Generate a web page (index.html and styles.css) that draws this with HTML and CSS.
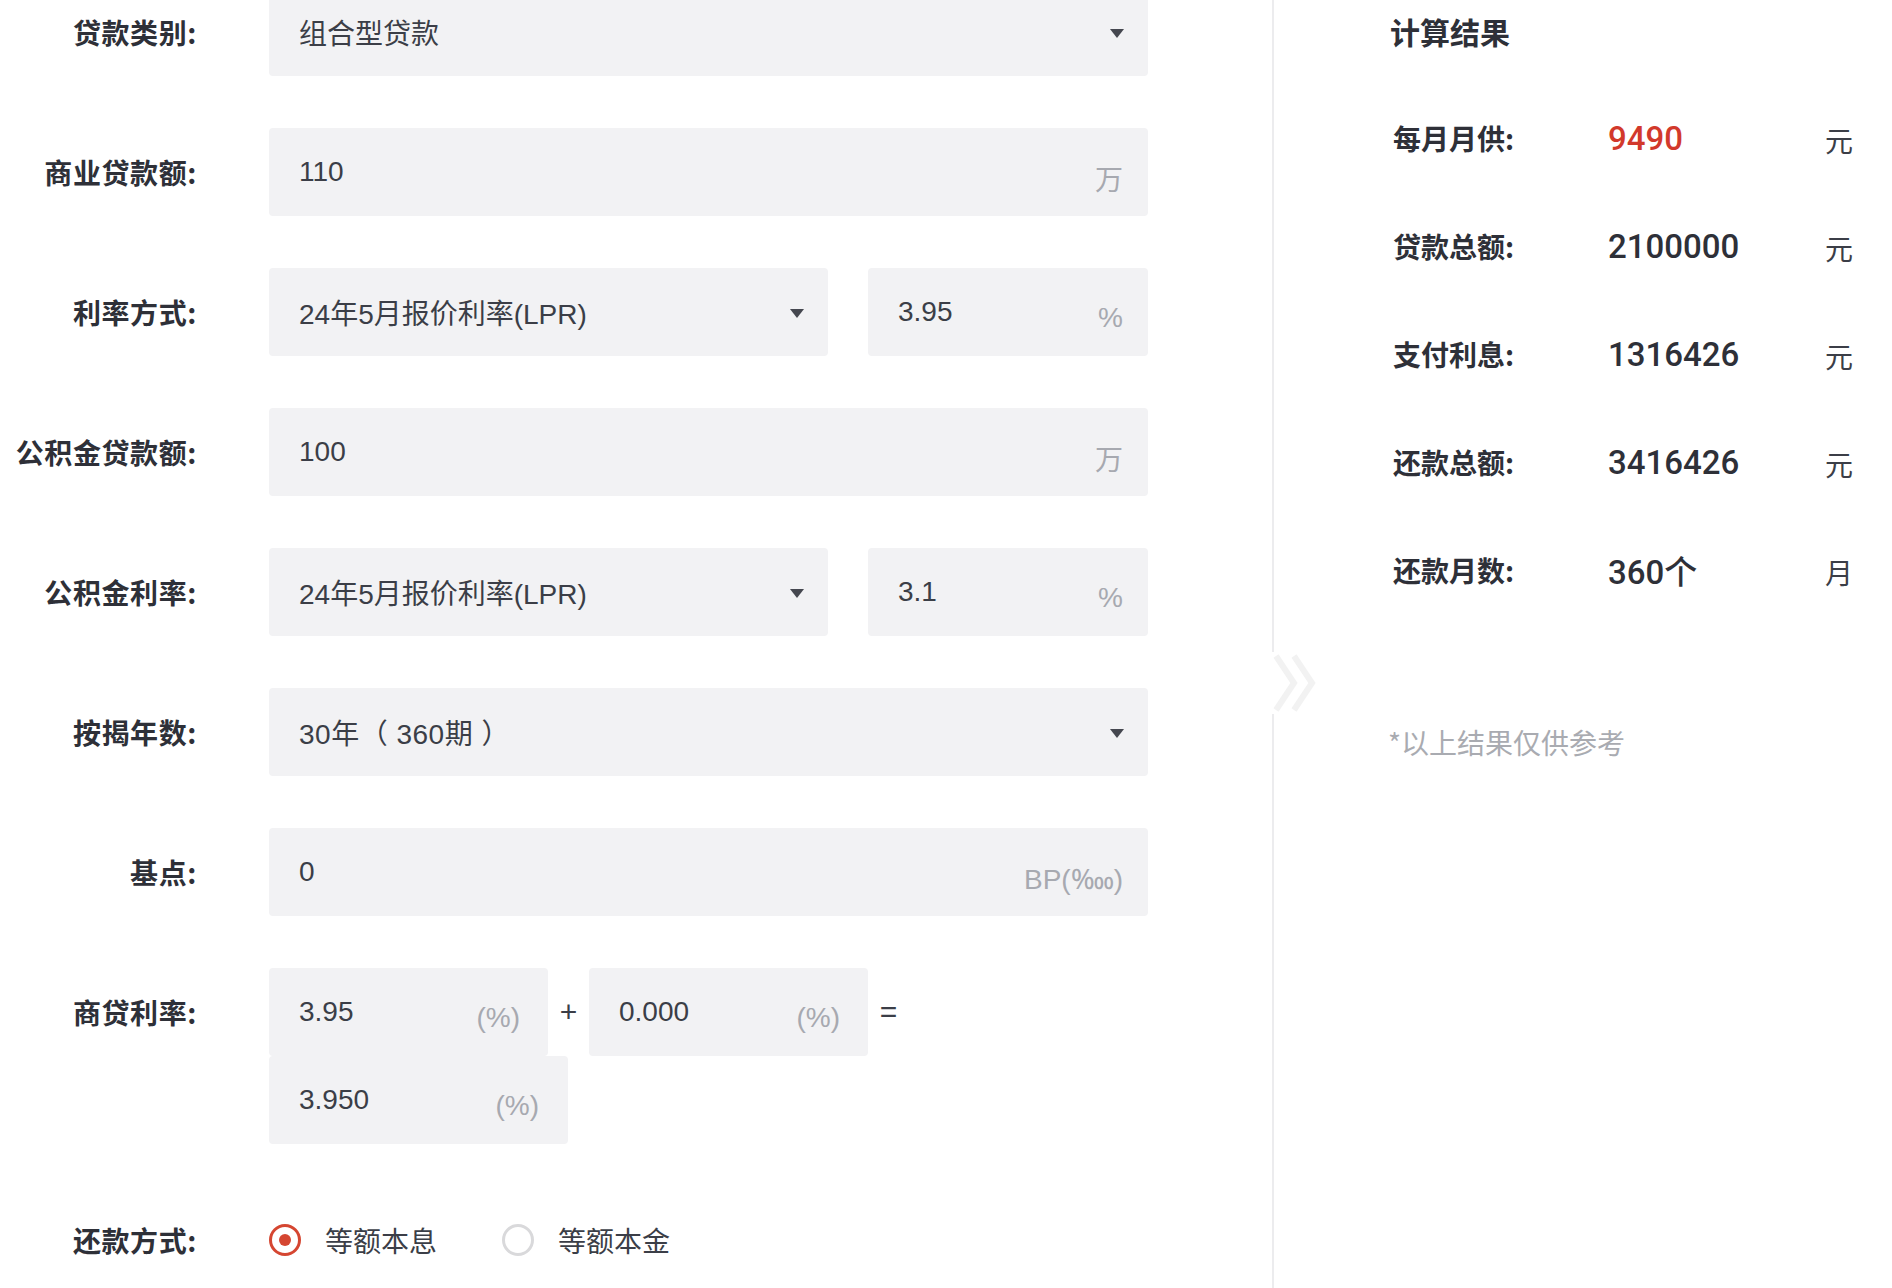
FILE: index.html
```html
<!DOCTYPE html>
<html lang="zh-CN">
<head>
<meta charset="utf-8">
<title>房贷计算器</title>
<link rel="stylesheet" href="styles.css">
</head>
<body>
<div class="page">
  <div class="form">
    <div class="row">
      <div class="label">贷款类别:</div>
      <div class="box select wide"><span class="val">组合型贷款</span><span class="arrow"></span></div>
    </div>
    <div class="row">
      <div class="label">商业贷款额:</div>
      <div class="box wide"><span class="val">110</span><span class="unit">万</span></div>
    </div>
    <div class="row">
      <div class="label">利率方式:</div>
      <div class="pair">
        <div class="box select mid"><span class="val">24年5月报价利率(LPR)</span><span class="arrow"></span></div>
        <div class="box rate"><span class="val">3.95</span><span class="unit">%</span></div>
      </div>
    </div>
    <div class="row">
      <div class="label">公积金贷款额:</div>
      <div class="box wide"><span class="val">100</span><span class="unit">万</span></div>
    </div>
    <div class="row">
      <div class="label">公积金利率:</div>
      <div class="pair">
        <div class="box select mid"><span class="val">24年5月报价利率(LPR)</span><span class="arrow"></span></div>
        <div class="box rate"><span class="val">3.1</span><span class="unit">%</span></div>
      </div>
    </div>
    <div class="row">
      <div class="label">按揭年数:</div>
      <div class="box select wide"><span class="val term">30年（ 360期 ）</span><span class="arrow"></span></div>
    </div>
    <div class="row">
      <div class="label">基点:</div>
      <div class="box wide"><span class="val">0</span><span class="unit">BP(‱)</span></div>
    </div>
    <div class="row">
      <div class="label">商贷利率:</div>
      <div class="calc">
        <div class="box small"><span class="val">3.95</span><span class="unit">(%)</span></div>
        <span class="op">+</span>
        <div class="box small"><span class="val">0.000</span><span class="unit">(%)</span></div>
        <span class="op">=</span>
        <div class="box result"><span class="val">3.950</span><span class="unit">(%)</span></div>
      </div>
    </div>
    <div class="row last">
      <div class="label">还款方式:</div>
      <div class="radios">
        <label class="radio"><span class="dot on"></span><span>等额本息</span></label>
        <label class="radio"><span class="dot"></span><span>等额本金</span></label>
      </div>
    </div>
  </div>

  <div class="results">
    <svg class="chev" viewBox="0 0 46 62" width="46" height="62" aria-hidden="true">
      <rect x="0" y="0" width="8" height="62" fill="#ffffff"/>
      <polyline points="4,4 22,31 4,58" fill="none" stroke="#f2f2f2" stroke-width="6"/>
      <polyline points="22,4 40,31 22,58" fill="none" stroke="#f2f2f2" stroke-width="6"/>
    </svg>
    <h2 class="title">计算结果</h2>
    <div class="res-row"><span class="res-label">每月月供:</span><span class="res-val red">9490</span><span class="res-unit">元</span></div>
    <div class="res-row"><span class="res-label">贷款总额:</span><span class="res-val">2100000</span><span class="res-unit">元</span></div>
    <div class="res-row"><span class="res-label">支付利息:</span><span class="res-val">1316426</span><span class="res-unit">元</span></div>
    <div class="res-row"><span class="res-label">还款总额:</span><span class="res-val">3416426</span><span class="res-unit">元</span></div>
    <div class="res-row"><span class="res-label">还款月数:</span><span class="res-val">360个</span><span class="res-unit">月</span></div>
    <p class="note">*以上结果仅供参考</p>
  </div>
</div>
</body>
</html>
```
FILE: styles.css
```css
html, body {
  margin: 0;
  padding: 0;
  background: #ffffff;
}
body {
  font-family: "Liberation Sans", "Noto Sans CJK SC", sans-serif;
  color: #333333;
  overflow: hidden;
  height: 1288px;
}
.page {
  display: flex;
  align-items: stretch;
  height: 1288px;
}
.form {
  width: 1272px;
  flex: none;
  margin-top: -12px;
}
.row {
  display: flex;
  align-items: flex-start;
  margin-bottom: 52px;
}
.label {
  width: 197px;
  margin-right: 72px;
  height: 88px;
  line-height: 88px;
  text-align: right;
  font-family: "Noto Sans CJK SC", sans-serif;
  font-weight: 700;
  font-size: 28px;
  letter-spacing: 0.6px;
  color: #2e3038;
  white-space: nowrap;
  flex: none;
}
.box {
  box-sizing: border-box;
  height: 88px;
  background: #f2f2f4;
  border-radius: 4px;
  display: flex;
  align-items: center;
  justify-content: space-between;
  padding: 0 25px 0 30px;
  font-size: 28px;
  flex: none;
}
.wide { width: 879px; }
.mid { width: 559px; }
.rate { width: 280px; }
.small { width: 279px; padding-right: 28px; }
.result { width: 299px; padding-right: 29px; }
.val {
  color: #3b3e47;
  font-family: "Liberation Sans", "Noto Sans CJK SC", sans-serif;
  white-space: nowrap;
}
.term { letter-spacing: 0.5px; }
.unit {
  color: #a7a9b0;
  margin-top: 12px;
  white-space: nowrap;
}
.select { padding-right: 24px; }
.arrow {
  width: 0;
  height: 0;
  border-left: 7px solid transparent;
  border-right: 7px solid transparent;
  border-top: 9px solid #45474f;
  margin-top: 2px;
}
.pair {
  display: flex;
  gap: 40px;
}
.calc {
  width: 879px;
  display: flex;
  flex-wrap: wrap;
  align-items: center;
}
.op {
  width: 41px;
  text-align: center;
  font-size: 30px;
  color: #3b3e47;
  flex: none;
}
.row.last {
  height: 88px;
  align-items: center;
}
.radios {
  display: flex;
  align-items: center;
  gap: 65px;
  height: 88px;
}
.radio {
  display: flex;
  align-items: center;
  gap: 24px;
  font-family: "Noto Sans CJK SC", sans-serif;
  font-size: 28px;
  color: #3b3e47;
}
.dot {
  box-sizing: border-box;
  width: 32px;
  height: 32px;
  border-radius: 50%;
  border: 3px solid #d9d9db;
  display: flex;
  align-items: center;
  justify-content: center;
}
.dot.on {
  border-color: #d54631;
}
.dot.on::after {
  content: "";
  width: 12px;
  height: 12px;
  border-radius: 50%;
  background: #d54631;
}
.results {
  position: relative;
  flex: 1;
  border-left: 2px solid #ececee;
  padding-left: 116px;
  padding-top: 11px;
  font-family: "Noto Sans CJK SC", sans-serif;
}
.chev {
  position: absolute;
  left: -2px;
  top: 652px;
}
.title {
  margin: 0;
  height: 40px;
  line-height: 40px;
  font-size: 30px;
  font-weight: 700;
  color: #2e3038;
}
.title + .res-row { margin-top: 33px; }
.res-row {
  display: flex;
  align-items: center;
  height: 108px;
  padding-left: 3px;
}
.res-label {
  width: 215px;
  font-weight: 700;
  font-size: 28px;
  color: #2e3038;
  flex: none;
}
.res-val {
  width: 217px;
  flex: none;
  font-family: Roboto, "Noto Sans CJK SC", sans-serif;
  font-size: 33px;
  font-weight: 500;
  color: #2e3038;
}
.res-val.red { color: #d2392b; }
.res-unit {
  font-size: 28px;
  color: #3b3e47;
  margin-top: 4px;
}
.note {
  margin: 98px 0 0 -2px;
  height: 40px;
  line-height: 40px;
  font-size: 28px;
  color: #a9abb1;
}
```
